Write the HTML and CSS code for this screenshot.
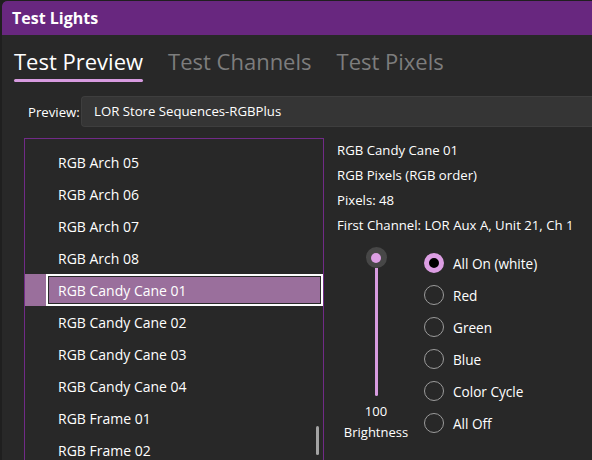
FILE: index.html
```html
<!DOCTYPE html>
<html>
<head>
<meta charset="utf-8">
<link rel="stylesheet" href="styles.css">
</head>
<body>
<div class="window">
  <header class="titlebar">Test Lights</header>
  <nav class="tabs">
    <span class="tab active">Test Preview</span>
    <span class="tab">Test Channels</span>
    <span class="tab">Test Pixels</span>
  </nav>
  <div class="preview-row">
    <span class="preview-label">Preview:</span>
    <div class="combo">LOR Store Sequences-RGBPlus</div>
  </div>
  <div class="content">
    <div class="list">
      <div class="item"><span class="item-box">RGB Arch 05</span></div>
      <div class="item"><span class="item-box">RGB Arch 06</span></div>
      <div class="item"><span class="item-box">RGB Arch 07</span></div>
      <div class="item"><span class="item-box">RGB Arch 08</span></div>
      <div class="item selected"><span class="item-box">RGB Candy Cane 01</span></div>
      <div class="item"><span class="item-box">RGB Candy Cane 02</span></div>
      <div class="item"><span class="item-box">RGB Candy Cane 03</span></div>
      <div class="item"><span class="item-box">RGB Candy Cane 04</span></div>
      <div class="item"><span class="item-box">RGB Frame 01</span></div>
      <div class="item"><span class="item-box">RGB Frame 02</span></div>
      <div class="scroll-thumb"></div>
    </div>
    <div class="details">
      <div class="info">
        <div>RGB Candy Cane 01</div>
        <div>RGB Pixels (RGB order)</div>
        <div>Pixels: 48</div>
        <div>First Channel: LOR Aux A, Unit 21, Ch 1</div>
      </div>
      <div class="controls">
        <div class="slider">
          <div class="slider-track">
            <div class="thumb"><div class="thumb-dot"></div></div>
            <div class="track"></div>
          </div>
          <div class="slider-value">100</div>
          <div class="slider-label">Brightness</div>
        </div>
        <div class="radios">
          <div class="radio checked"><span class="circle"></span>All On (white)</div>
          <div class="radio"><span class="circle"></span>Red</div>
          <div class="radio"><span class="circle"></span>Green</div>
          <div class="radio"><span class="circle"></span>Blue</div>
          <div class="radio"><span class="circle"></span>Color Cycle</div>
          <div class="radio"><span class="circle"></span>All Off</div>
        </div>
      </div>
    </div>
  </div>
</div>
</body>
</html>
```

FILE: styles.css
```css
html, body {
  margin: 0;
  padding: 0;
  height: 100%;
  overflow: hidden;
  background: #1f1f1f;
}
body {
  font-family: "Open Sans", "Liberation Sans", sans-serif;
  color: #ffffff;
  font-size: 14px;
}
.window {
  margin: 1px 0 0 2px;
  height: 459px;
  background: #282828;
  border-top-left-radius: 5px;
  overflow: hidden;
}
.titlebar {
  height: 34px;
  background: #68277f;
  padding-left: 10px;
  font-size: 16px;
  font-weight: 700;
  line-height: 34px;
  border-top-left-radius: 5px;
}
.tabs {
  display: flex;
  gap: 25px;
  padding: 10px 0 0 12px;
  height: 38px;
}
.tab {
  font-size: 22px;
  color: #7d7d7d;
  line-height: 33px;
  height: 35px;
}
.tab.active {
  color: #ffffff;
  position: relative;
}
.tab.active::after {
  content: "";
  position: absolute;
  left: 0;
  right: 0;
  bottom: -2px;
  height: 3px;
  border-radius: 2px;
  background: #d79be0;
}
.preview-row {
  display: flex;
  align-items: center;
  margin-top: 13px;
  padding-left: 26px;
  height: 31px;
  font-size: 13.2px;
}
.preview-label {
  width: 53px;
}
.combo {
  flex: 1;
  height: 29px;
  line-height: 29px;
  background: #353535;
  border: 1px solid #3e3e3e;
  border-right: none;
  border-radius: 4px 0 0 4px;
  padding-left: 12px;
}
.content {
  display: flex;
  margin-top: 11px;
  padding-left: 22px;
}
.list {
  position: relative;
  width: 298px;
  height: 340px;
  border: 1px solid #712b88;
  padding-top: 7px;
  flex: none;
}
.item {
  height: 32px;
  padding-left: 21px;
  display: flex;
}
.item-box {
  flex: 1;
  display: flex;
  align-items: center;
  padding-left: 9px;
  box-sizing: border-box;
  border: 3px solid transparent;
  font-size: 14px;
}
.item.selected {
  background: #9a6f9c;
}
.item.selected .item-box {
  border: 2px solid #ffffff;
  outline: 1px solid #2a2a2a;
  outline-offset: -3px;
  padding-left: 10px;
}
.scroll-thumb {
  position: absolute;
  left: 291px;
  top: 287px;
  width: 3px;
  height: 29px;
  border-radius: 2px;
  background: #a3a3a3;
}
.details {
  padding-left: 13px;
  display: flex;
  flex-direction: column;
}
.info div {
  height: 25px;
  line-height: 25px;
  font-size: 13.2px;
}
.controls {
  display: flex;
  margin-top: 9px;
  margin-left: 4px;
}
.slider {
  width: 70px;
  display: flex;
  flex-direction: column;
  align-items: center;
  font-size: 13px;
}
.slider-track {
  display: flex;
  flex-direction: column;
  align-items: center;
  height: 152px;
}
.thumb {
  width: 21px;
  height: 21px;
  border-radius: 50%;
  background: #474747;
  display: flex;
  align-items: center;
  justify-content: center;
  flex: none;
}
.thumb-dot {
  width: 10px;
  height: 10px;
  border-radius: 50%;
  background: #dc9ee3;
}
.track {
  width: 3px;
  height: 128px;
  background: #d89ce0;
  border-radius: 0 0 2px 2px;
}
.slider-value {
  line-height: 20px;
  margin-top: 2px;
}
.slider-label {
  line-height: 23px;
}
.radios {
  margin-left: 13px;
  display: flex;
  flex-direction: column;
}
.radio {
  height: 32px;
  display: flex;
  align-items: center;
  gap: 9px;
  font-size: 13.6px;
}
.circle {
  width: 20px;
  height: 20px;
  box-sizing: border-box;
  border-radius: 50%;
  border: 1.5px solid #9b9b9b;
  flex: none;
}
.radio.checked .circle {
  border: 5.5px solid #dc9ee3;
  background: #000000;
}
```
